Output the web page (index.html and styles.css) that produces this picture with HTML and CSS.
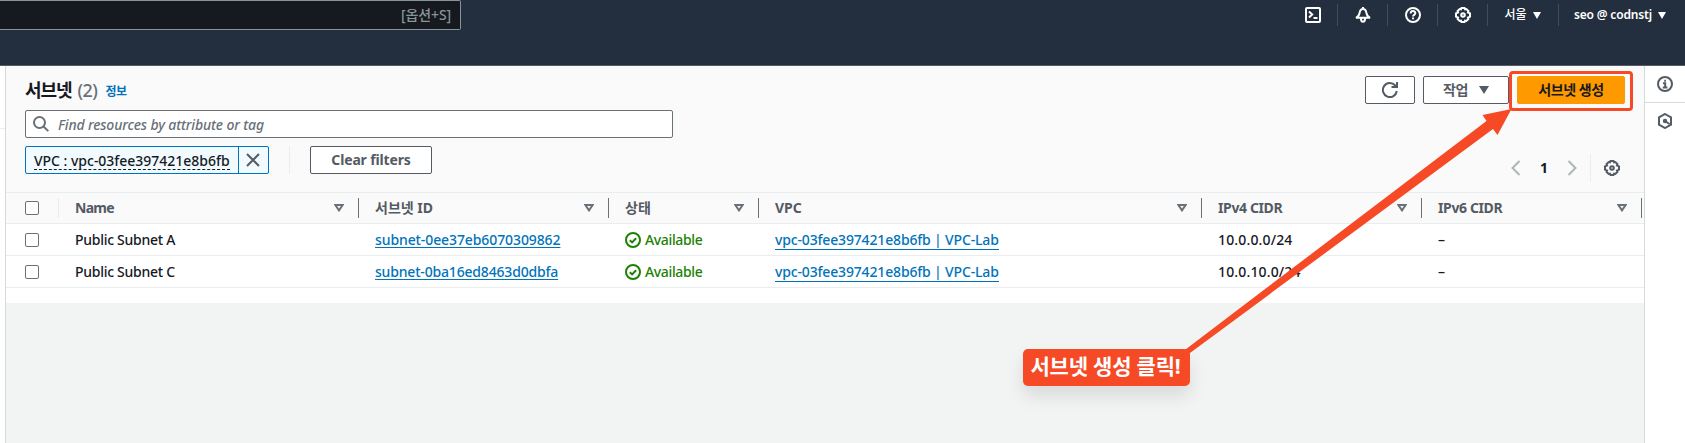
FILE: index.html
```html
<!DOCTYPE html>
<html lang="ko">
<head>
<meta charset="utf-8">
<title>서브넷</title>
<link rel="stylesheet" href="styles.css">
</head>
<body>
<svg class="defs" width="0" height="0">
  <symbol id="gear" viewBox="0 0 16 16"><path d="M6.500 1h3l.5 1.400 1.400-.4 2 2-.5 1.400 2.100.9v3.400l-2.100.9.5 1.400-2 2-1.400-.4-.5 1.400h-3L6 13.600l-1.400.4-2-2 .5-1.400L1 9.700V6.300l2.100-.9L2.600 4l2-2 1.400.4z"/><circle cx="8" cy="8" r="1.800"/></symbol>
  <symbol id="sort" viewBox="0 0 10 8"><path d="M1.300 1h7.400L5 6.400z"/></symbol>
  <symbol id="ok" viewBox="0 0 16 16"><circle cx="8" cy="8" r="7"/><path d="M4.800 8.200l2.300 2.200 4-4.200"/></symbol>
</svg>
<header class="top">
  <div class="search"><span class="t-key">[옵션+S]</span></div>
  <nav class="nav">
    <span class="item"><svg class="ic" viewBox="0 0 16 16"><rect x="1" y="1" width="14" height="14" rx="1"/><path d="M4 4.500l3.200 3L4 10.500M8.500 11h4"/></svg></span>
    <span class="item"><svg class="ic" viewBox="0 0 16 16"><path d="M8 0v2M1 10.800c2.600-1.300 3.200-2.500 3.600-5C4.900 3.500 6 2 8 2s3.100 1.500 3.400 3.800c.4 2.500 1 3.700 3.600 5zM6 11.500c0 4.400 4 4.400 4 0"/></svg></span>
    <span class="item"><svg class="ic" viewBox="0 0 16 16"><circle cx="8" cy="8" r="7"/><path d="M5.700 6.400C5.700 3.300 10.300 3.400 10.300 6.200 10.300 7.900 8 7.800 8 9.600M8 10.600v1.700"/></svg></span>
    <span class="item"><svg class="ic"><use href="#gear"/></svg></span>
    <span class="item region"><span class="t-region">서울</span><i class="caret"></i></span>
    <span class="item user"><span class="t-user">seo @ codnstj</span><i class="caret"></i></span>
  </nav>
</header>
<div class="body">
  <aside class="left"></aside>
  <main class="main">
    <section class="panel">
      <div class="tools">
        <div class="head">
          <h1 class="title">서브넷</h1><span class="count">(2)</span><span class="info">정보</span>
          <div class="actions">
            <span class="btn refresh"><svg class="ic" viewBox="0 0 16 16"><path d="M14.800 9A7 7 0 1 1 13 3.300L14 5M15 0v5H9.500"/></svg></span>
            <span class="btn menu"><span>작업</span><i class="caret big"></i></span>
            <span class="btn primary">서브넷 생성</span>
          </div>
        </div>
        <div class="field"><svg class="ic" viewBox="0 0 16 16"><circle cx="6.500" cy="6.500" r="5.500"/><path d="M10.300 10.300l5 4.800"/></svg><span class="t-find">Find resources by attribute or tag</span></div>
        <div class="filters">
          <span class="token"><span class="label"><span class="t-token">VPC : vpc-03fee397421e8b6fb</span></span><span class="close"><svg viewBox="0 0 14 14"><path d="M1 1l12 12M13 1L1 13"/></svg></span></span>
          <span class="rule"></span>
          <span class="btn clear">Clear filters</span>
          <div class="pager"><svg class="arrow" viewBox="0 0 10 16"><path d="M8.500 1L1.500 8l7 7"/></svg><b>1</b><svg class="arrow" viewBox="0 0 10 16"><path d="M1.500 1l7 7-7 7"/></svg><span class="rule"></span><svg class="ic"><use href="#gear"/></svg></div>
        </div>
      </div>
      <div class="row th">
        <div class="c check"><i class="box"></i></div>
        <div class="c"><span class="h-name">Name</span><svg class="sort"><use href="#sort"/></svg></div>
        <div class="c"><span>서브넷 ID</span><svg class="sort"><use href="#sort"/></svg></div>
        <div class="c"><span>상태</span><svg class="sort"><use href="#sort"/></svg></div>
        <div class="c"><span>VPC</span><svg class="sort"><use href="#sort"/></svg></div>
        <div class="c"><span class="h-cidr">IPv4 CIDR</span><svg class="sort"><use href="#sort"/></svg></div>
        <div class="c"><span class="h-cidr">IPv6 CIDR</span><svg class="sort"><use href="#sort"/></svg></div>
      </div>
      <div class="row">
        <div class="c check"><i class="box"></i></div>
        <div class="c"><span class="t-name">Public Subnet A</span></div>
        <div class="c"><a class="t-id">subnet-0ee37eb6070309862</a></div>
        <div class="c"><svg class="ic ok"><use href="#ok"/></svg><span class="t-ok">Available</span></div>
        <div class="c"><a class="t-vpc">vpc-03fee397421e8b6fb | VPC-Lab</a></div>
        <div class="c"><span class="t-ip">10.0.0.0/24</span></div>
        <div class="c">–</div>
      </div>
      <div class="row">
        <div class="c check"><i class="box"></i></div>
        <div class="c"><span class="t-name">Public Subnet C</span></div>
        <div class="c"><a class="t-id t-id-c">subnet-0ba16ed8463d0dbfa</a></div>
        <div class="c"><svg class="ic ok"><use href="#ok"/></svg><span class="t-ok">Available</span></div>
        <div class="c"><a class="t-vpc">vpc-03fee397421e8b6fb | VPC-Lab</a></div>
        <div class="c"><span class="t-ip">10.0.10.0/24</span></div>
        <div class="c">–</div>
      </div>
    </section>
  </main>
  <aside class="right">
    <span class="tab"><svg class="ic" viewBox="0 0 16 16"><circle cx="8" cy="8" r="7"/><path d="M6 7.300h2.200v4M5.800 11.500h4.600M7.200 4.700h1.700"/></svg></span>
    <span class="tab"><svg class="ic" viewBox="0 0 16 16"><path d="M8 1l6 3.400v7.200L8 15l-6-3.400V4.400z"/><circle cx="8" cy="8" r="1.200"/><path d="M8 8l4.500 3"/></svg></span>
  </aside>
</div>
<svg class="arrow-note" viewBox="0 0 1685 443"><path d="M1185.500 349.500L1486.500 121l-4-6 29-6-14 26-4.500-6L1190 353z"/></svg>
<div class="frame"></div>
<div class="callout">서브넷 생성 클릭!</div>
</body>
</html>
```
FILE: styles.css
```css
* { box-sizing: border-box; }
body { margin: 0; width: 1685px; height: 443px; overflow: hidden; position: relative; background: #f2f3f3; color: #16191f; font: 500 14px/22px "Noto Sans", "Noto Sans CJK KR", sans-serif; }
svg { flex: none; fill: none; stroke: currentColor; stroke-width: 2; }
.defs { position: absolute; }
.ic { width: 16px; height: 16px; }
span, a, b, h1 { white-space: nowrap; }
.top { height: 66px; background: #232f3e; border-bottom: 1px solid #545b64; display: flex; justify-content: space-between; color: #fff; }
.search { width: 461px; height: 30px; background: #16191f; border: 1px solid #879596; border-left: 0; border-radius: 0 2px 2px 0; display: flex; align-items: center; justify-content: flex-end; padding-right: 9px; color: #879596; }
.t-key { letter-spacing: -.1px; }
.nav { display: flex; height: 22px; margin-top: 4px; }
.item { width: 50px; display: flex; align-items: center; justify-content: center; border-right: 1px solid #414d5c; }
.region { width: 71px; gap: 6px; padding-right: 1px; font-size: 12px; }
.user { width: 126px; gap: 6px; padding-right: 4px; font-size: 12px; font-weight: 600; letter-spacing: -.15px; border: 0; }
.caret { border: 4px solid transparent; border-top: 7px solid currentColor; border-bottom: 0; }
.caret.big { border-width: 8px 5px 0; }
.body { display: flex; height: 377px; }
.left { width: 5px; background: linear-gradient(#eaeded, #eaeded) 0 62px / 5px 1px no-repeat #fff; }
.main { width: 1640px; border: 1px solid #d5dbdb; border-width: 0 1px; }
.panel { height: 237px; background: #fff; }
.tools { height: 127px; background: #fafafa; border-bottom: 1px solid #eaeded; padding: 10px 19px 0; }
.head { display: flex; align-items: center; height: 28px; }
.title { margin: 0; font-size: 18px; font-weight: 700; letter-spacing: -1.1px; padding-bottom: 1px; }
.count { font-size: 18px; font-weight: 500; color: #687078; margin-left: 6px; padding-bottom: 1px; letter-spacing: -.5px; }
.info { font-size: 12px; font-weight: 600; color: #0073bb; margin: 3px 0 0 8px; letter-spacing: -.5px; }
.actions { display: flex; gap: 8px; margin-left: auto; }
.btn { height: 28px; display: flex; align-items: center; justify-content: center; border: 1px solid #545b64; border-radius: 2px; background: #fff; color: #545b64; font-weight: 700; }
.refresh { width: 50px; }
.menu { width: 86px; gap: 11px; letter-spacing: -.3px; padding-bottom: 1px; }
.primary { width: 108px; background: #ff9900; border-color: #ff9900; color: #16191f; letter-spacing: -.4px; padding-bottom: 1px; }
.field { width: 648px; height: 28px; margin-top: 6px; display: flex; align-items: center; gap: 9px; padding-left: 7px; border: 1px solid #687078; border-radius: 2px; background: #fff; color: #687078; font-style: italic; }
.t-find { letter-spacing: -.15px; padding-top: 1px; }
.filters { display: flex; height: 28px; margin-top: 8px; }
.token { display: flex; width: 244px; border: 1px solid #0073bb; border-radius: 2px; background: #f1faff; }
.label { width: 213px; padding: 3px 8px; border-right: 1px solid #0073bb; }
.t-token { display: inline-block; width: 196px; height: 19px; line-height: 19px; border-bottom: 1px dashed #16191f; letter-spacing: -.02px; }
.close { width: 28px; display: grid; place-items: center; color: #545b64; }
.close svg { width: 14px; height: 14px; }
.rule { width: 1px; height: 28px; background: #eaeded; }
.token + .rule { margin: 0 20px; }
.clear { width: 122px; letter-spacing: -.15px; padding-bottom: 1px; }
.pager { display: flex; align-items: center; height: 28px; margin: 8px 5px 0 auto; }
.pager b { width: 46px; text-align: center; color: #16191f; }
.arrow { width: 10px; height: 16px; color: #aab7b8; }
.pager .rule { margin: 0 13px; }
.pager .ic { color: #545b64; }
.row { display: grid; grid-template-columns: 53px 300px 250px 150px 443px 220px 220px; height: 32px; border-bottom: 1px solid #eaeded; }
.th { height: 31px; background: #fafafa; color: #545b64; font-weight: 700; }
.c { display: flex; align-items: center; padding-left: 16px; }
.check { padding-left: 19px; }
.th .c { height: 20px; margin-top: 5px; border-right: 1px solid #687078; justify-content: space-between; padding-right: 14px; }
.th .check { border-color: #eaeded; }
.h-name { letter-spacing: -.7px; }
.h-cidr { letter-spacing: -.38px; }
.box { width: 14px; height: 14px; border: 1px solid #687078; border-radius: 2px; background: #fff; flex: none; }
.sort { width: 10px; height: 8px; color: #687078; }
.ok { color: #1d8102; margin-right: 4px; }
.t-ok { color: #1d8102; letter-spacing: -.35px; }
a { color: #0073bb; }
.t-name { letter-spacing: -.28px; }
.t-id { text-decoration: underline; text-underline-offset: 2px; letter-spacing: -.1px; }
.t-id-c { letter-spacing: -.18px; }
.t-vpc { height: 20px; line-height: 20px; border-bottom: 1px solid #0073bb; letter-spacing: -.16px; }
.t-ip { letter-spacing: .15px; }
.right { width: 40px; background: #fff; color: #545b64; }
.tab { height: 37px; display: grid; place-items: center; border-bottom: 1px solid #d5dbdb; }
.tab:last-child { border: 0; height: 36px; }
.arrow-note { position: absolute; left: 0; top: 0; width: 1685px; height: 443px; fill: #f54a25; stroke: none; }
.frame { position: absolute; left: 1509px; top: 71px; width: 124px; height: 40px; border: 3px solid #f54a25; border-radius: 4px; }
.callout { position: absolute; left: 1023px; top: 349px; width: 167px; height: 37px; border-radius: 5px; background: #f54a25; color: #fff; font-size: 21px; font-weight: 700; line-height: 35px; text-align: center; letter-spacing: -.2px; padding-right: 2px; box-shadow: 0 10px 18px rgba(0,0,0,.1); white-space: nowrap; }
```
